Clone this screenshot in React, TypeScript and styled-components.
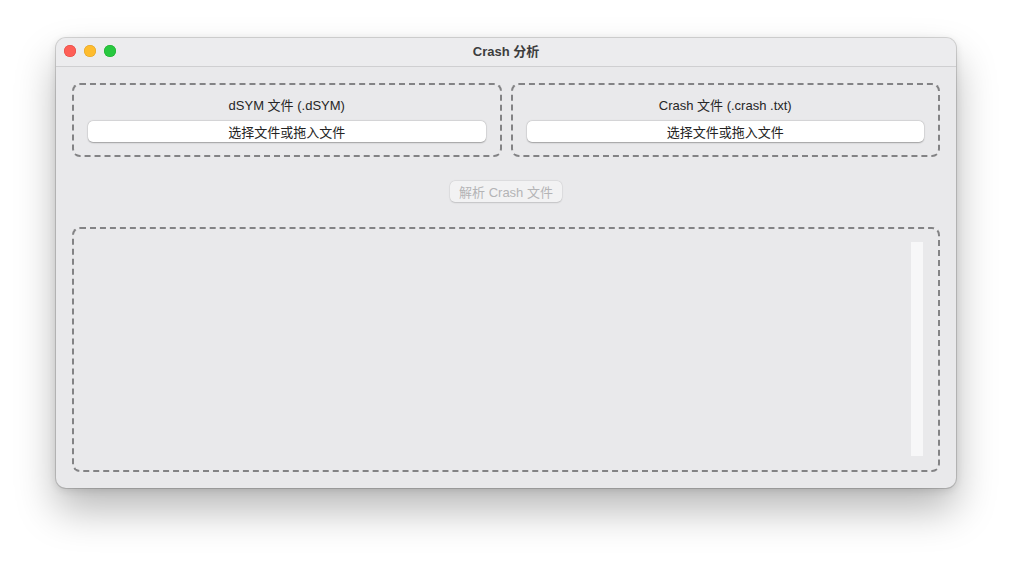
import React from "react";
import styled, { createGlobalStyle } from "styled-components";

const Global = createGlobalStyle`
  html, body { margin: 0; padding: 0; background: #ffffff; }
  body { font-family: "Liberation Sans", "Noto Sans CJK SC", sans-serif; }
`;

const Page = styled.div`
  width: 1012px;
  height: 562px;
  padding: 38px 0 0 56px;
  box-sizing: border-box;
`;

const Window = styled.div`
  width: 900px;
  height: 450px;
  border-radius: 10px;
  background: #e9e9eb;
  box-shadow: 0 0 0 1px rgba(0,0,0,0.14), 0 22px 40px rgba(0,0,0,0.28), 0 2px 8px rgba(0,0,0,0.12);
  display: flex;
  flex-direction: column;
  overflow: hidden;
`;

const TitleBar = styled.div`
  height: 29px;
  flex: 0 0 29px;
  background: #ececee;
  border-bottom: 1px solid #cfcfd1;
  display: flex;
  align-items: center;
  position: relative;
  padding-left: 8px;
  padding-bottom: 3px;
  box-sizing: border-box;
`;

const Lights = styled.div`
  display: flex;
  gap: 8px;
  margin-top: 1px;
`;

const Light = styled.span<{ $c: string; $b: string }>`
  width: 12px;
  height: 12px;
  border-radius: 50%;
  background: ${(p) => p.$c};
  box-shadow: inset 0 0 0 0.5px ${(p) => p.$b};
`;

const Title = styled.div`
  position: absolute;
  left: 0;
  right: 0;
  top: 0;
  bottom: 3px;
  display: flex;
  align-items: center;
  justify-content: center;
  font-size: 13px;
  font-weight: 700;
  color: #3d3d3d;
  pointer-events: none;
`;

const Content = styled.div`
  flex: 1;
  display: flex;
  flex-direction: column;
  padding: 16px 16px 16px 16px;
`;

const TopRow = styled.div`
  display: flex;
  gap: 9px;
`;

const DropBox = styled.div`
  flex: 1;
  height: 74px;
  box-sizing: border-box;
  border: 2px dashed #838385;
  border-radius: 8px;
  padding: 13px 14px 0 14px;
  display: flex;
  flex-direction: column;
  align-items: center;
`;

const Label = styled.div`
  font-size: 13px;
  line-height: 16px;
  color: #262626;
`;

const PickButton = styled.button`
  margin-top: 7px;
  width: 100%;
  height: 21px;
  border: none;
  border-radius: 5px;
  background: #ffffff;
  box-shadow: 0 0.5px 1.5px rgba(0,0,0,0.3), 0 0 0 0.5px rgba(0,0,0,0.06);
  font-family: inherit;
  font-size: 13px;
  color: #222;
  padding: 0;
`;

const ActionRow = styled.div`
  display: flex;
  justify-content: center;
  margin-top: 24px;
`;

const ParseButton = styled.button`
  height: 21px;
  padding: 0 8px;
  border: none;
  border-radius: 5px;
  background: #f2f2f3;
  box-shadow: 0 0.5px 1.5px rgba(0,0,0,0.15), 0 0 0 0.5px rgba(0,0,0,0.05);
  font-family: inherit;
  font-size: 13px;
  color: #b4b4b6;
  width: 112px;
`;

const OutputBox = styled.div`
  margin-top: 25px;
  flex: 1;
  box-sizing: border-box;
  border: 2px dashed #838385;
  border-radius: 8px;
  display: flex;
  justify-content: flex-end;
  padding: 13px 15px 14px 0;
`;

const Scroller = styled.div`
  width: 12px;
  background: #f7f7f8;
`;

export default function App() {
  return (
    <Page>
      <Global />
      <Window>
        <TitleBar>
          <Lights>
            <Light $c="#fe5f57" $b="#e0443e" />
            <Light $c="#febc2e" $b="#dea123" />
            <Light $c="#28c840" $b="#1aab29" />
          </Lights>
          <Title>Crash 分析</Title>
        </TitleBar>
        <Content>
          <TopRow>
            <DropBox>
              <Label>dSYM 文件 (.dSYM)</Label>
              <PickButton>选择文件或拖入文件</PickButton>
            </DropBox>
            <DropBox>
              <Label>Crash 文件 (.crash .txt)</Label>
              <PickButton>选择文件或拖入文件</PickButton>
            </DropBox>
          </TopRow>
          <ActionRow>
            <ParseButton disabled>解析 Crash 文件</ParseButton>
          </ActionRow>
          <OutputBox>
            <Scroller />
          </OutputBox>
        </Content>
      </Window>
    </Page>
  );
}
